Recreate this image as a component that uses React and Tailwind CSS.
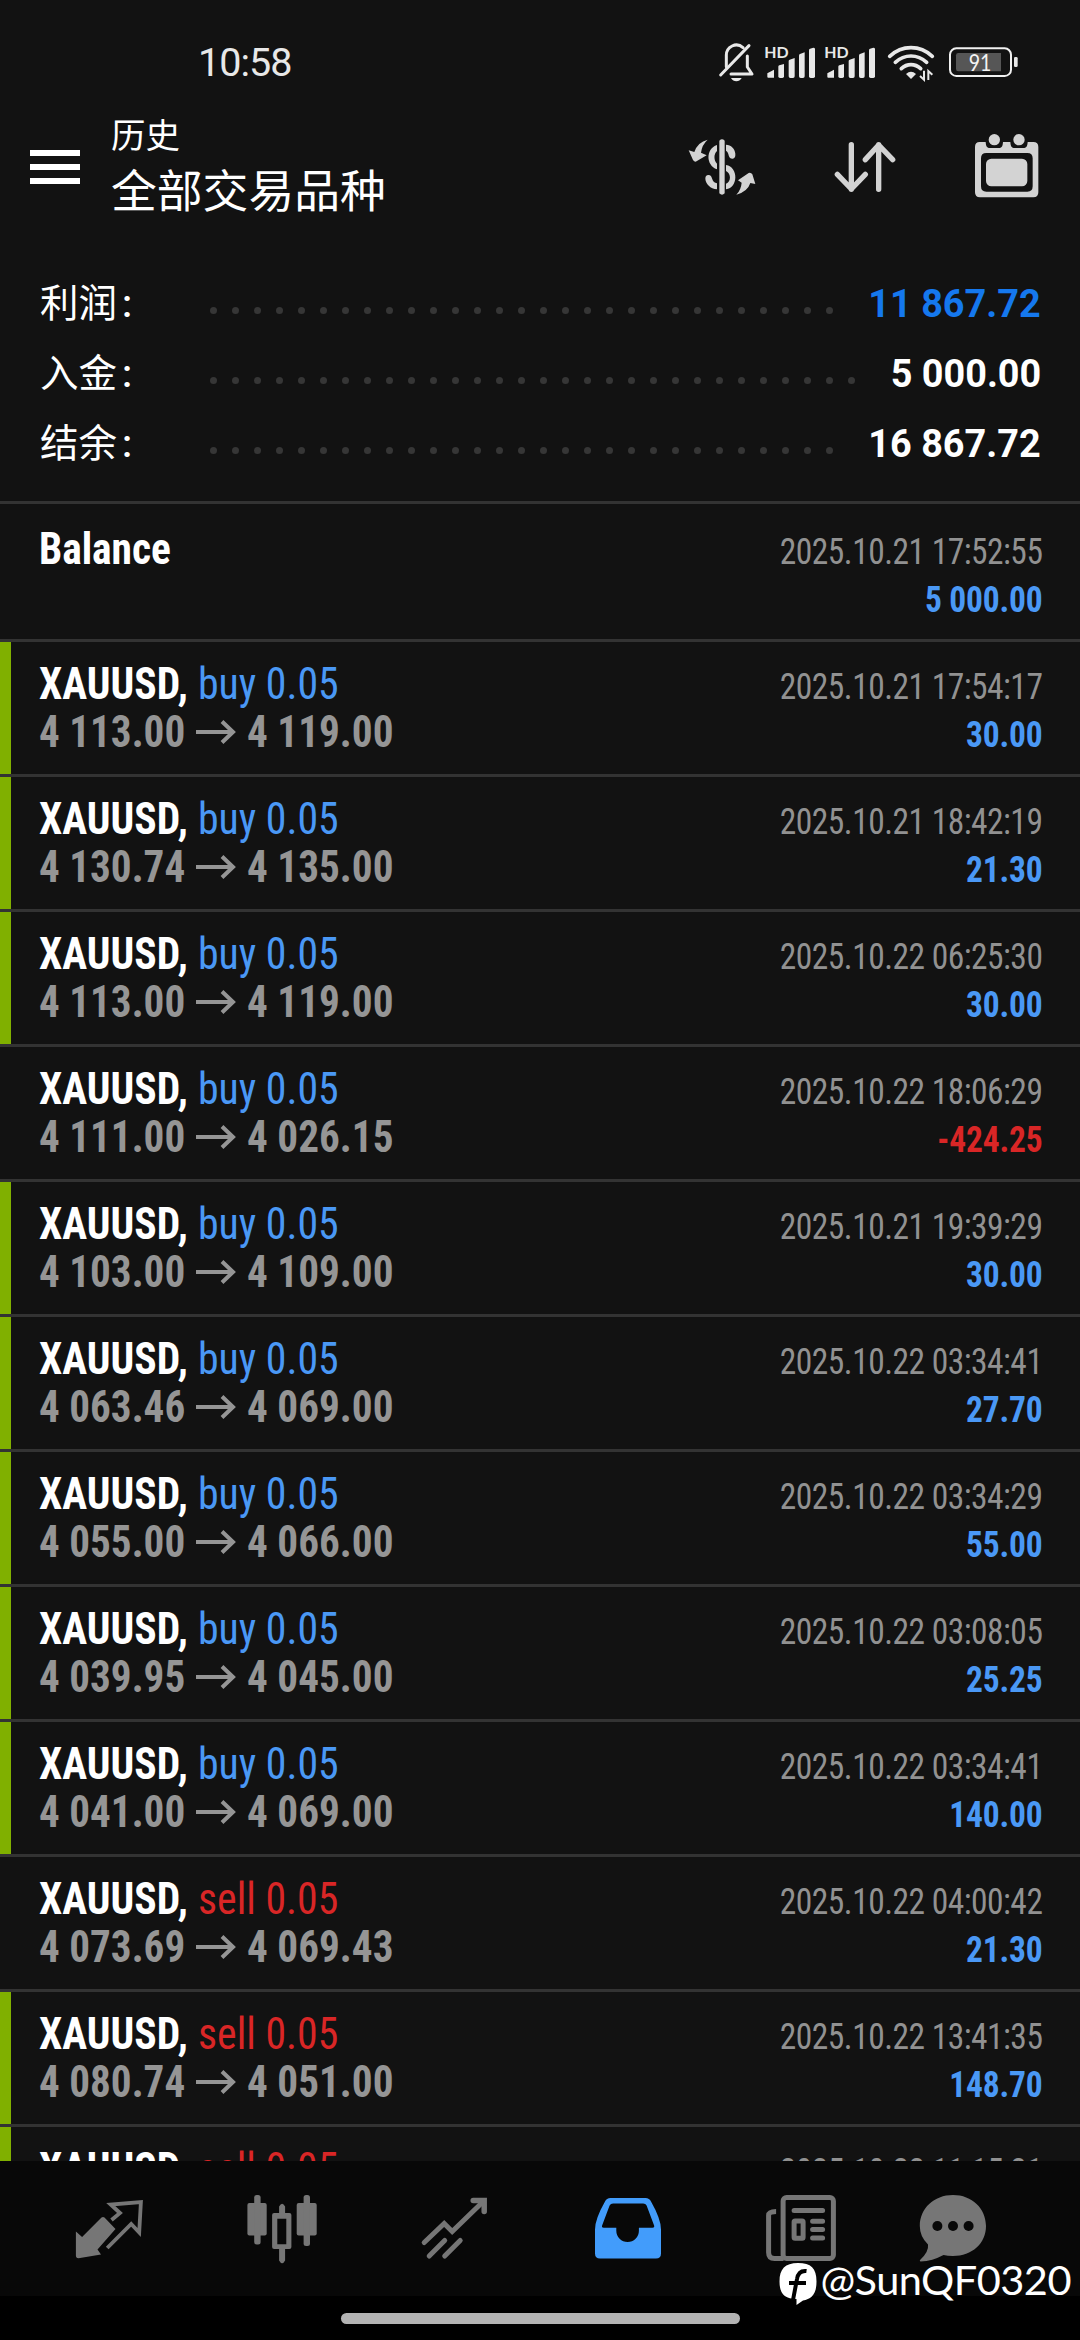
import React from "react";
import clsx from "clsx";

const summary = [
  { label: "利润", value: "11 867.72", dots: 29, color: "text-[#1578ee]" },
  { label: "入金", value: "5 000.00", dots: 30, color: "text-white" },
  { label: "结余", value: "16 867.72", dots: 29, color: "text-white" },
];

const deals = [
  { type: "buy", open: "4 113.00", close: "4 119.00", time: "2025.10.21 17:54:17", profit: "30.00", tp: true },
  { type: "buy", open: "4 130.74", close: "4 135.00", time: "2025.10.21 18:42:19", profit: "21.30", tp: true },
  { type: "buy", open: "4 113.00", close: "4 119.00", time: "2025.10.22 06:25:30", profit: "30.00", tp: true },
  { type: "buy", open: "4 111.00", close: "4 026.15", time: "2025.10.22 18:06:29", profit: "-424.25", tp: false },
  { type: "buy", open: "4 103.00", close: "4 109.00", time: "2025.10.21 19:39:29", profit: "30.00", tp: true },
  { type: "buy", open: "4 063.46", close: "4 069.00", time: "2025.10.22 03:34:41", profit: "27.70", tp: true },
  { type: "buy", open: "4 055.00", close: "4 066.00", time: "2025.10.22 03:34:29", profit: "55.00", tp: true },
  { type: "buy", open: "4 039.95", close: "4 045.00", time: "2025.10.22 03:08:05", profit: "25.25", tp: true },
  { type: "buy", open: "4 041.00", close: "4 069.00", time: "2025.10.22 03:34:41", profit: "140.00", tp: true },
  { type: "sell", open: "4 073.69", close: "4 069.43", time: "2025.10.22 04:00:42", profit: "21.30", tp: false },
  { type: "sell", open: "4 080.74", close: "4 051.00", time: "2025.10.22 13:41:35", profit: "148.70", tp: true },
  { type: "sell", time: "2025.10.22 11:15:21", tp: true },
];

function Signal() {
  return (
    <svg className="h-[41px] w-[52px]" viewBox="312 66 156 123" fill="#e8e8e8">
      <text x="313" y="114" fontFamily="Lato" fontWeight="700" fontSize="48" textLength="73" lengthAdjust="spacingAndGlyphs">HD</text>
      <path d="M322 160l20-11v24h-17q-3 0-3-3z" />
      <path d="M355 140q0-3 3-4l14-4v37q0 5-5 5h-7q-5 0-5-5z" />
      <path d="M386 123q0-3 3-4l15-5v55q0 5-5 5h-8q-5 0-5-5z" />
      <path d="M417 107q0-4 3-5l14-5v72q0 5-5 5h-7q-5 0-5-5z" />
      <path d="M447 91q0-4 3-5l10-3q5 0 5 4v82q0 5-5 5h-8q-5 0-5-5z" />
    </svg>
  );
}

function StatusBar() {
  return (
    <div className="flex h-[84px] items-end justify-between pr-[61px] pl-[198px]">
      <div className="pb-[1px] text-[39.5px] leading-[41px] tracking-[-1px] text-[#e8e8e8]">10:58</div>
      <div className="flex items-center pb-[1px]">
        <svg className="h-[41px] w-[37px]" viewBox="174 66 111 123" fill="none" stroke="#e8e8e8" strokeWidth="9" strokeLinecap="round" strokeLinejoin="round">
          <path d="M199 140v-33a30 31 0 0 1 50-24" />
          <path d="M262 108v33l14 21h-63" />
          <path d="M182 165L267 77" />
          <path d="M213 174h32q-6 10-16 10t-16-10z" fill="#e8e8e8" stroke="none" />
        </svg>
        <div className="ml-[9px]"><Signal /></div>
        <div className="ml-[8px]"><Signal /></div>
        <svg className="ml-[11px] h-[41px] w-[48px]" viewBox="681 66 144 123" fill="none" stroke="#e8e8e8" strokeWidth="11" strokeLinecap="round">
          <path d="M689 109q28-26 64-26t64 26" />
          <path d="M706 127q21-19 47-19t47 19" />
          <path d="M724 146q13-12 29-12t29 12" />
          <path d="M738 162q15-13 30 0l-15 15z" fill="#e8e8e8" stroke="none" />
          <path d="M792 152v27l-12-11M805 180v-27l12 11" strokeWidth="6" strokeLinecap="butt" />
        </svg>
        <svg className="ml-[13px] h-[41px] w-[71px]" viewBox="864 66 213 123">
          <rect x="870" y="85" width="183" height="83" rx="19" fill="none" stroke="#f0f0f0" strokeWidth="6" />
          <path d="M895 99h128v55H895q-7 0-7-7v-41q0-7 7-7z" fill="#565656" />
          <rect x="1062" y="111" width="11" height="30" rx="4" fill="#e8e8e8" />
          <text x="926" y="152" fill="#f4f4f4" fontFamily="Lato" fontSize="69" textLength="68" lengthAdjust="spacingAndGlyphs">91</text>
        </svg>
      </div>
    </div>
  );
}

function Header() {
  return (
    <header className="flex h-[153px] items-start pr-[41px] pl-[30px]">
      <div className="mt-[66px] flex w-[50px] flex-col gap-[8px]">
        <span className="h-[6px] bg-white" />
        <span className="h-[6px] bg-white" />
        <span className="h-[6px] bg-white" />
      </div>
      <div className="mt-[29px] ml-[31px] flex-1 text-white">
        <div className="text-[34.5px] leading-[46px]">历史</div>
        <div className="mt-[4px] text-[45.8px] leading-[60px]">全部交易品种</div>
      </div>
      <div className="mt-[49px] flex gap-[78px]">
        <svg className="h-[65px] w-[68px]" viewBox="84 339 204 195" fill="#d3d3d3">
          <path d="M178 362q8-8 16 0v158q-8 8-16 0z" />
          <path d="M171 375v18c-10 8-10 28 0 38v17c-34-12-34-62 0-73z" />
          <path d="M198 374c15 0 27 12 28 27q1 14-8 15c-9 1-11-6-13-14q-2-7-7-10z" />
          <path d="M198 435c38 6 37 69 0 73v-17c16-6 16-30 0-38z" />
          <path d="M171 508c-20-2-34-16-35-32q0-11 9-11c8 0 10 6 12 13q3 10 14 12z" />
          <path d="M143 359q-17 15-20 39l17 8-33 19q-5 0-8-5l-13-29 17 5q10-30 40-37z" />
          <path d="M229 524q14-14 16-36l-11-7 32-22q7-2 11 4l9 29-15-3q-8 26-42 35z" />
        </svg>
        <svg className="h-[65px] w-[62px]" viewBox="522 339 186 195" fill="none" stroke="#d3d3d3" strokeWidth="16" strokeLinecap="round" strokeLinejoin="round">
          <path d="M574 374v134M532 463l42 44 42-44" />
          <path d="M656 508V374M616 419l40-44 42 44" />
        </svg>
        <svg className="h-[65px] w-[65px]" viewBox="942 339 195 195" fill="#d3d3d3">
          <circle cx="1003" cy="359" r="17" />
          <circle cx="1077" cy="359" r="17" />
          <path fillRule="evenodd" d="M959 366h18c1 14 4 18 13 18h26c9 0 12-4 13-18h22c1 14 4 18 13 18h26c9 0 12-4 13-18h17q15 0 15 15v136q0 15-15 15H960q-15 0-15-15V381q0-15 14-15zM979 399q-16 0-16 16v84q0 16 16 16h123q16 0 16-16v-84q0-16-16-16z" />
          <rect x="978" y="416" width="124" height="83" rx="16" />
        </svg>
      </div>
    </header>
  );
}

function Summary() {
  return (
    <section className="h-[267px] border-b-[3px] border-[#333] pt-[31px] pr-[39px] pl-[40px]">
      {summary.map((s) => (
        <div key={s.label} className="flex h-[70px] items-center">
          <div className="flex w-[162px] pt-[2px] text-[38.5px] text-white">
            {s.label}
            <span className="ml-[5px] font-medium">:</span>
          </div>
          <div className="mt-[15px] flex">
            {Array.from({ length: s.dots }, (_, i) => (
              <span key={i} className="mx-[7.5px] size-[7px] rounded-full bg-[#363636]" />
            ))}
          </div>
          <div className={clsx("ml-auto origin-right scale-x-[0.97] pt-[2px] text-[39px] font-bold", s.color)}>{s.value}</div>
        </div>
      ))}
    </section>
  );
}

function Amount({ time, value }) {
  return (
    <div className="origin-right scale-x-[0.93] text-right text-[36px] leading-[48px] text-[#919191]">
      <div className="tracking-[-0.55px]">{time}</div>
      {value && (
        <div className={clsx("font-bold tracking-[-0.2px]", value.startsWith("-") ? "text-[#d92626]" : "text-[#4a98f5]")}>{value}</div>
      )}
    </div>
  );
}

function Deal({ deal }) {
  return (
    <div className="flex h-[135px] shrink-0 border-b-[3px] border-[#333] [font-stretch:75%]">
      <div className={clsx("w-[11px]", deal.tp && "bg-[#80b000]")} />
      <div className="flex flex-1 justify-between pr-[37.5px] pl-[28px]">
        <div className="pt-[18px] text-[44px] leading-[48px]">
          <div className="flex">
            <span className="w-[159px] origin-left scale-x-[0.945] font-bold text-white">XAUUSD,</span>
            <span className={clsx("origin-left scale-x-[0.95]", deal.type === "buy" ? "text-[#4a98f5]" : "text-[#d92626]")}>
              {deal.type} 0.05
            </span>
          </div>
          {deal.open && (
            <div className="flex items-center font-bold text-[#959595]">
              <span className="w-[157px] origin-left scale-x-[0.935]">{deal.open}</span>
              <svg className="w-[40px]" viewBox="0 0 40 24" fill="none" stroke="#959595" strokeWidth="4">
                <path d="M0 12h38M26 1.500l11 10.500-11 10.500" />
              </svg>
              <span className="ml-[11px] origin-left scale-x-[0.937]">{deal.close}</span>
            </div>
          )}
        </div>
        <div className="pt-[21px]">
          <Amount time={deal.time} value={deal.profit} />
        </div>
      </div>
    </div>
  );
}

function NavBar() {
  return (
    <nav className="flex h-[135px] items-center bg-[#080808] pl-[22px] text-[#767676]">
      <div className="flex w-[173px] justify-center">
        <svg className="h-[76px] w-[70px]" viewBox="73.500 2190 70 76" fill="currentColor">
          <path d="M101 2216.500q1.500-1 3 0l11 11.500-18 20.500 3.500 5-22.500 3.700q-2.600 0-2.600-2.600v-24l6.200 5.400z" />
          <path d="M111 2219l8.500-7-9.300-8.500 30.200-2.500-1.700 30.500-8-8.500-24 24" fill="none" stroke="currentColor" strokeWidth="3.800" />
        </svg>
      </div>
      <div className="flex w-[173px] justify-center">
        <svg className="h-[76px] w-[70px]" viewBox="246.200 2190 70 76" fill="currentColor">
          <rect x="246.600" y="2202" width="19.300" height="32.500" rx="2" />
          <rect x="253.400" y="2194" width="6.400" height="49.500" rx="2.500" />
          <rect x="295.900" y="2202" width="20" height="32.500" rx="2" />
          <rect x="302.800" y="2194" width="6.400" height="51" rx="2.500" />
          <path fillRule="evenodd" d="M273.300 2212h5v-6.500q3-5.500 6 0v6.500h4.300q2 0 2 2v32q0 2-2 2h-4.300v11.500q-3 5.500-6 0V2248h-5q-2 0-2-2v-32q0-2 2-2zm3.200 5.700v25.600h9v-25.600z" />
        </svg>
      </div>
      <div className="flex w-[173px] justify-center">
        <svg className="h-[76px] w-[70px]" viewBox="419.800 2190 70 76" fill="none" stroke="currentColor" strokeWidth="5" strokeLinecap="round">
          <path d="M424 2241.500l20-19 8 8 31-30" />
          <path d="M473 2199.500h11v11" strokeWidth="5.500" />
          <path d="M429 2255l15.500-15.500M444.500 2255l15.500-15.500" />
        </svg>
      </div>
      <div className="flex w-[173px] justify-center text-[#429cfb]">
        <svg className="h-[76px] w-[70px]" viewBox="592.500 2190 70 76" fill="currentColor">
          <path fillRule="evenodd" d="M610 2197h35q4 0 5.500 3.500 10 17.500 10 28v24q0 5-5 5h-56q-5 0-5-5v-24q0-10.500 10-28 1.500-3.500 5.500-3.500zm2.600 5.500q-2.500 0-3.500 2l-7.500 20q-.6 2.200 1.600 2.200h12.600v3a11.300 11.300 0 0 0 22.600 0v-3h13.600q2.200 0 1.600-2.200l-7.500-20q-1-2-3.500-2z" />
        </svg>
      </div>
      <div className="flex w-[173px] justify-center">
        <svg className="h-[76px] w-[70px]" viewBox="765.900 2190 70 76" fill="none" stroke="currentColor" strokeWidth="5">
          <rect x="783" y="2196.500" width="50.300" height="61" rx="3.500" />
          <path d="M776 2210.500q-7.500 0-7.500 4v37q0 6 6 6h9" />
          <path d="M794 2209.500h28.500M812.500 2220.300h10M812.500 2228.600h10M812.500 2236.900h10" strokeLinecap="round" />
          <rect x="794" y="2220" width="9" height="17.300" rx="1" />
        </svg>
      </div>
      <div className="flex w-[132px] justify-center">
        <svg className="h-[76px] w-[70px]" viewBox="918 2190 70 76">
          <path d="M953 2194c19 0 33 13.500 33 31s-14 30-33 30q-5.500 0-9.500-1-11 6-23 6.500-1.500-.5 0-2 8.500-8 7.500-15-8.200-8-8.200-18.500c0-17.500 14.200-31 33.200-31z" fill="currentColor" />
          <g fill="#080808">
            <circle cx="937.400" cy="2225" r="5" />
            <circle cx="953" cy="2225" r="5" />
            <circle cx="968.600" cy="2225" r="5" />
          </g>
        </svg>
      </div>
    </nav>
  );
}

export default function App() {
  return (
    <div className="relative flex h-[2340px] w-[1080px] flex-col overflow-hidden bg-[#121212] font-['Roboto','Noto_Sans_CJK_SC',sans-serif]">
      <StatusBar />
      <Header />
      <Summary />

      <main className="flex h-[1657px] flex-col overflow-hidden">
        <div className="flex h-[138px] shrink-0 justify-between border-b-[3px] border-[#333] pr-[37.5px] pl-[39px] [font-stretch:75%]">
          <div className="origin-left scale-x-[0.94] pt-[21px] text-[44px] leading-[48px] font-bold text-white">Balance</div>
          <div className="pt-[24px]">
            <Amount time="2025.10.21 17:52:55" value="5 000.00" />
          </div>
        </div>
        {deals.map((deal, i) => (
          <Deal key={i} deal={deal} />
        ))}
      </main>

      <NavBar />

      {/* Gesture bar */}
      <div className="flex flex-1 justify-center bg-black pt-[17px]">
        <div className="h-[11px] w-[399px] rounded-full bg-[#b3b3b3]" />
      </div>

      {/* Watermark */}
      <div className="absolute top-[2257px] right-[9px] flex items-start text-white">
        <svg className="mt-[5px] h-[44px] w-[38px]" viewBox="0 0 38 44">
          <path d="M19 1C32 1 37.500 6 37.500 19.500S32 37 24 38.500L17.500 43V37C6 37 .5 32 .5 19.500S6 1 19 1z" fill="#fff" />
          <path d="M27.500 9q-8-1-9.500 8l-4 21M10 21h17" fill="none" stroke="#000" strokeWidth="4" />
        </svg>
        <span className="ml-[3px] font-['Lato',sans-serif] text-[41.5px] leading-[44px] tracking-[-0.5px]">@SunQF0320</span>
      </div>
    </div>
  );
}
